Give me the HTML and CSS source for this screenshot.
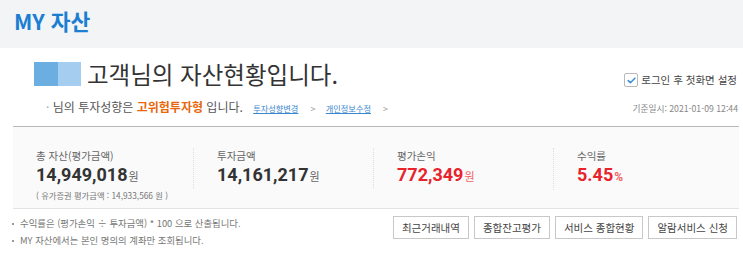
FILE: index.html
```html
<!DOCTYPE html>
<html lang="ko">
<head>
	<meta charset="UTF-8">
	<meta name="viewport" content="width=device-width, initial-scale=1.0">
	<title>MY 자산</title>
	<link rel="stylesheet" href="styles.css">
</head>
<body>
	<header class="top">
		<h1>MY 자산</h1>
	</header>

	<main class="asset">
		<div class="head">
			<div class="head-row">
				<h2 class="title"><span class="mark"></span>고객님의 자산현황입니다.</h2>
				<label class="check">
					<span class="box">
						<svg width="11" height="11" viewBox="0 0 11 11"><path d="M2.2 5.6 L4.4 7.7 L8.9 3.2" fill="none" stroke="#3d8fdc" stroke-width="1.6" stroke-linecap="round" stroke-linejoin="round"/></svg>
					</span>
					로그인 후 첫화면 설정
				</label>
			</div>
			<div class="head-row sub">
				<p class="tendency">
					<span class="dot">·</span> 님의 투자성향은 <strong>고위험투자형</strong> 입니다.
					<a href="#" class="link">투자성향변경</a><span class="arrow">&gt;</span>
					<a href="#" class="link">개인정보수정</a><span class="arrow">&gt;</span>
				</p>
				<p class="date">기준일시: 2021-01-09 12:44</p>
			</div>
		</div>

		<div class="summary">
			<div class="col">
				<div class="label">총 자산(평가금액)</div>
				<div class="value"><span class="num">14,949,018</span><span class="unit">원</span></div>
				<div class="note">( 유가증권 평가금액 : 14,933,566 원 )</div>
			</div>
			<div class="col sep">
				<div class="label">투자금액</div>
				<div class="value"><span class="num">14,161,217</span><span class="unit">원</span></div>
			</div>
			<div class="col sep">
				<div class="label">평가손익</div>
				<div class="value red"><span class="num">772,349</span><span class="unit">원</span></div>
			</div>
			<div class="col sep">
				<div class="label">수익률</div>
				<div class="value red"><span class="num">5.45</span><span class="unit pct">%</span></div>
			</div>
		</div>

		<div class="foot">
			<ul class="notes">
				<li>수익률은 (평가손익 ÷ 투자금액) * 100 으로 산출됩니다.</li>
				<li>MY 자산에서는 본인 명의의 계좌만 조회됩니다.</li>
			</ul>
			<div class="buttons">
				<button class="btn">최근거래내역</button>
				<button class="btn">종합잔고평가</button>
				<button class="btn">서비스 종합현황</button>
				<button class="btn">알람서비스 신청</button>
			</div>
		</div>
	</main>
</body>
</html>
```

FILE: styles.css
```css
:root {
	--blue: #1b7ed3;
	--red: #e8232b;
	--line: #e3e3e3;
}

* { box-sizing: border-box; padding: 0; margin: 0; }

body {
	font-family: "Noto Sans CJK KR", "Noto Sans", sans-serif;
	color: #333;
	background: #fff;
	width: 743px;
}

.top {
	height: 48px;
	padding: 10px 14px;
	background: #f3f4f6;
}
.top h1 {
	font-size: 21.5px;
	line-height: 22px;
	font-weight: 700;
	color: var(--blue);
}

.asset {
	margin: 0 4px 0 13px;
}

.head {
	padding: 14px 1px 9px 0;
	border-bottom: 1px solid #b8b8b8;
}

.head-row {
	display: flex;
	justify-content: space-between;
	align-items: flex-end;
}

.title {
	display: flex;
	align-items: center;
	gap: 6px;
	margin-left: 21px;
	font-size: 23.5px;
	line-height: 24px;
	font-weight: 400;
	color: #333;
}
.mark {
	width: 47px;
	height: 24px;
	background: linear-gradient(to right, #6aaee2 50%, #a5cdef 50%);
}

.check {
	display: flex;
	align-items: center;
	gap: 3px;
	margin-right: 1px;
	margin-bottom: -1px;
	font-size: 10.5px;
	line-height: 14px;
	color: #444;
}
.box {
	display: flex;
	align-items: center;
	justify-content: center;
	width: 14px;
	height: 14px;
	border: 1px solid #b9b9b9;
	border-radius: 2px;
	background: #fff;
}

.sub {
	margin-top: 13px;
	align-items: baseline;
}
.tendency {
	margin-left: 33px;
	font-size: 12px;
	line-height: 16px;
	color: #555;
}
.dot { color: #aaa; }
.tendency strong {
	color: #e8670c;
	font-weight: 700;
}
.link {
	margin-left: 7px;
	font-size: 8.2px;
	color: #3b87cf;
}
.arrow {
	margin-left: 12px;
	font-size: 9px;
	color: #999;
}
.date {
	font-size: 8.7px;
	color: #888;
}

.summary {
	display: grid;
	grid-template-columns: 180px 180px 180px 1fr;
	align-items: start;
	height: 82px;
	padding-top: 21px;
	background: #fafafa;
	border-bottom: 1px solid var(--line);
}
.col {
	padding-left: 23px;
}
.col.sep {
	border-left: 1px dotted #ddd;
	padding-bottom: 2px;
}
.label {
	font-size: 10.5px;
	line-height: 16px;
	color: #666;
}
.value {
	font-family: Roboto, "Noto Sans", sans-serif;
	font-size: 18px;
	line-height: 22px;
	font-weight: 700;
	color: #333;
}
.unit {
	margin-left: 1px;
	font-family: "Noto Sans CJK KR", sans-serif;
	font-size: 11px;
	font-weight: 400;
	color: #666;
}
.value.red { color: var(--red); }
.value.red .unit { color: #f06262; }
.unit.pct {
	font-family: Roboto, sans-serif;
	font-size: 12px;
	font-weight: 700;
}
.note {
	margin-top: 2px;
	font-size: 8.3px;
	line-height: 12px;
	color: #777;
}

.foot {
	display: flex;
	justify-content: space-between;
	align-items: flex-start;
}
.notes {
	list-style: none;
	padding-top: 6px;
	margin-left: -1px;
	font-size: 9.4px;
	line-height: 17px;
	color: #777;
}
.notes li {
	display: flex;
	align-items: center;
	gap: 6px;
}
.notes li::before {
	content: "";
	width: 2px;
	height: 2px;
	background: #999;
}

.buttons {
	display: flex;
	gap: 5px;
	padding-top: 7px;
	margin-right: 2px;
}
.btn {
	height: 23px;
	padding: 0 8px;
	border: 1px solid #c8c8c8;
	background: #fff;
	font-family: inherit;
	font-size: 10.5px;
	color: #444;
}
```
